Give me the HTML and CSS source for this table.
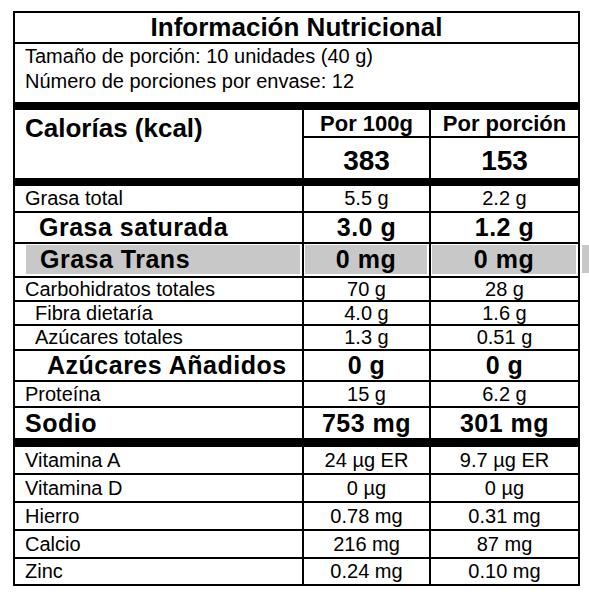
FILE: index.html
```html
<!DOCTYPE html>
<html>
    <head>
        <meta charset="UTF-8">
        <title>Información Nutricional</title>
        <link rel="stylesheet" href="styles.css">
    </head>
    <body>
        <div class="nutri">
            <div class="title">Información Nutricional</div>
            <div class="serving">
                <p>Tamaño de porción: 10 unidades (40 g)</p>
                <p>Número de porciones por envase: 12</p>
            </div>

            <div class="bar"></div>

            <div class="cal">
                <div class="cal_name">Calorías (kcal)</div>
                <div class="cal_head">Por 100g</div>
                <div class="cal_head">Por porción</div>
                <div class="cal_val">383</div>
                <div class="cal_val">153</div>
            </div>

            <div class="bar"></div>

            <div class="row grasa"><span class="name">Grasa total</span><span>5.5 g</span><span>2.2 g</span></div>
            <div class="row big sat"><span class="name">Grasa saturada</span><span>3.0 g</span><span>1.2 g</span></div>
            <div class="row big trans">
                <span class="name"><i class="shade">Grasa Trans</i></span>
                <span><i class="shade">0 mg</i></span>
                <span><i class="shade">0 mg</i></span>
            </div>
            <div class="row carb"><span class="name">Carbohidratos totales</span><span>70 g</span><span>28 g</span></div>
            <div class="row sub carb"><span class="name">Fibra dietaría</span><span>4.0 g</span><span>1.6 g</span></div>
            <div class="row sub azu"><span class="name">Azúcares totales</span><span>1.3 g</span><span>0.51 g</span></div>
            <div class="row big anad"><span class="name">Azúcares Añadidos</span><span>0 g</span><span>0 g</span></div>
            <div class="row prot"><span class="name">Proteína</span><span>15 g</span><span>6.2 g</span></div>
            <div class="row big sodio"><span class="name">Sodio</span><span>753 mg</span><span>301 mg</span></div>

            <div class="bar wide"></div>

            <div class="row"><span class="name">Vitamina A</span><span>24 µg ER</span><span>9.7 µg ER</span></div>
            <div class="row"><span class="name">Vitamina D</span><span>0 µg</span><span>0 µg</span></div>
            <div class="row"><span class="name">Hierro</span><span>0.78 mg</span><span>0.31 mg</span></div>
            <div class="row"><span class="name">Calcio</span><span>216 mg</span><span>87 mg</span></div>
            <div class="row last"><span class="name">Zinc</span><span>0.24 mg</span><span>0.10 mg</span></div>
        </div>
    </body>
</html>
```

FILE: styles.css
```css
body{
    margin: 0;
    padding: 11px 0 0 13px;
    background: #fff;
}
.nutri{
    width: 567px;
    border: 2px solid #000;
    box-sizing: border-box;
    font-family: "Liberation Sans", Arial, sans-serif;
    color: #000;
}
.title{
    height: 31px;
    box-sizing: border-box;
    border-bottom: 2px solid #000;
    text-align: center;
    font-size: 26px;
    font-weight: bold;
    line-height: 29px;
}
.serving{
    padding: 0 0 8px 10px;
    font-size: 20px;
    line-height: 25px;
}
.serving p{
    margin: 0;
}
.bar{
    height: 8px;
    background: #000;
}
.bar.wide{
    height: 9px;
}

/* calorias */
.cal{
    display: grid;
    grid-template-columns: 287px 127px 149px;
    grid-template-rows: 28px 40px;
    font-weight: bold;
}
.cal_name{
    grid-row: 1 / 3;
    padding: 3px 0 0 10px;
    font-size: 26px;
    line-height: 30px;
}
.cal_head{
    border-left: 2px solid #000;
    border-bottom: 2px solid #000;
    padding-top: 1px;
    text-align: center;
    font-size: 22px;
    line-height: 25px;
}
.cal_val{
    border-left: 2px solid #000;
    padding-top: 6px;
    text-align: center;
    font-size: 28px;
    line-height: 34px;
}

/* filas */
.row{
    display: grid;
    grid-template-columns: 287px 127px 149px;
    height: 28px;
    box-sizing: border-box;
    border-bottom: 2px solid #000;
    font-size: 20px;
}
.row > span{
    display: flex;
    align-items: center;
    justify-content: center;
    border-left: 2px solid #000;
}
.row > .name{
    justify-content: flex-start;
    border-left: 0;
    padding-left: 10px;
}
.row.big{
    font-size: 25px;
    font-weight: bold;
    letter-spacing: 0.5px;
}
.row.sub .name{
    padding-left: 20px;
}
.row.sat .name{
    padding-left: 24px;
}
.row.anad .name{
    padding-left: 32px;
}
.grasa{ height: 27px; }
.sat{ height: 31px; }
.trans{ height: 34px; position: relative; }
.carb{ height: 24px; }
.azu{ height: 25px; }
.anad{ height: 31px; }
.prot{ height: 26px; }
.sodio{ height: 30px; border-bottom: 0; }
.row.last{ height: 25px; border-bottom: 0; }

/* grasa trans en gris */
.shade{
    flex: 1;
    align-self: stretch;
    display: flex;
    align-items: center;
    justify-content: center;
    margin: 1px 2px 3px 1px;
    background: #c8c8c8;
    font-style: normal;
}
.trans .name{
    padding-left: 10px;
}
.trans .name .shade{
    justify-content: flex-start;
    padding-left: 14px;
}
.trans:after{
    position: absolute;
    top: 1px;
    bottom: 3px;
    left: calc(100% + 4px);
    width: 7px;
    content: "";
    background: #c8c8c8;
}
```
